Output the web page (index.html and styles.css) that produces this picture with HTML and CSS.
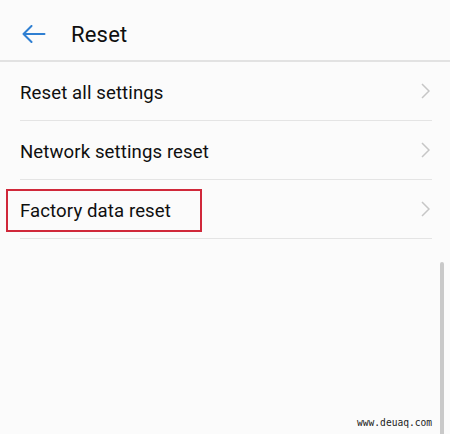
FILE: index.html
```html
<!DOCTYPE html>
<html>
<head>
<meta charset="utf-8">
<link rel="stylesheet" href="styles.css">
</head>
<body>
<div class="screen">
  <header class="appbar">
    <svg class="back" width="24" height="18" viewBox="0 0 24 18">
      <path d="M22.5 9H1.5M9.5 1L1.5 9L9.5 17" fill="none" stroke="#2f7fd2" stroke-width="2" stroke-linecap="round" stroke-linejoin="round"/>
    </svg>
    <h1 class="title">Reset</h1>
  </header>
  <ul class="list">
    <li class="row"><span class="label">Reset all settings</span><svg class="chev" width="9" height="16" viewBox="0 0 9 16"><path d="M1 1L8 8L1 15" fill="none" stroke="#c6c6c6" stroke-width="1.5"/></svg></li>
    <li class="row"><span class="label">Network settings reset</span><svg class="chev" width="9" height="16" viewBox="0 0 9 16"><path d="M1 1L8 8L1 15" fill="none" stroke="#c6c6c6" stroke-width="1.5"/></svg></li>
    <li class="row"><span class="label">Factory data reset</span><span class="highlight"></span><svg class="chev" width="9" height="16" viewBox="0 0 9 16"><path d="M1 1L8 8L1 15" fill="none" stroke="#c6c6c6" stroke-width="1.5"/></svg></li>
  </ul>
  <div class="scrollthumb"></div>
  <div class="watermark">www.deuaq.com</div>
</div>
</body>
</html>
```

FILE: styles.css
```css
html, body {
  margin: 0;
  padding: 0;
  background: #fbfbfb;
}
.screen {
  position: relative;
  width: 450px;
  height: 434px;
  overflow: hidden;
  background: #fbfbfb;
  font-family: Roboto, "Noto Sans", sans-serif;
  color: #0f0f0f;
}
.appbar {
  display: flex;
  align-items: center;
  height: 60px;
  border-bottom: 2px solid #e2e2e2;
  padding-left: 22px;
  box-sizing: content-box;
}
.back {
  display: block;
  margin-top: 8px;
  margin-bottom: 0;
}
.title {
  margin: 0 0 0 25px;
  padding-top: 8px;
  font-size: 22px;
  font-weight: 400;
  letter-spacing: 0.2px;
}
.list {
  list-style: none;
  margin: 0;
  padding: 0 18px 0 20px;
}
.row {
  position: relative;
  display: flex;
  align-items: center;
  justify-content: space-between;
  height: 58px;
  border-bottom: 1px solid #e4e4e4;
}
.label {
  font-size: 18.6px;
  padding-top: 3px;
  letter-spacing: 0.1px;
}
.chev {
  display: block;
  margin-right: 2px;
}
.highlight {
  position: absolute;
  left: -14px;
  top: 9px;
  width: 192px;
  height: 39px;
  border: 2px solid #d0283a;
}
.scrollthumb {
  position: absolute;
  left: 440px;
  top: 262px;
  width: 4px;
  height: 180px;
  border-radius: 2px 2px 0 0;
  background: #c9c9c9;
}
.watermark {
  position: absolute;
  left: 357px;
  top: 417px;
  font-family: "DejaVu Sans Mono", monospace;
  font-size: 9.6px;
  color: #222;
}
```
